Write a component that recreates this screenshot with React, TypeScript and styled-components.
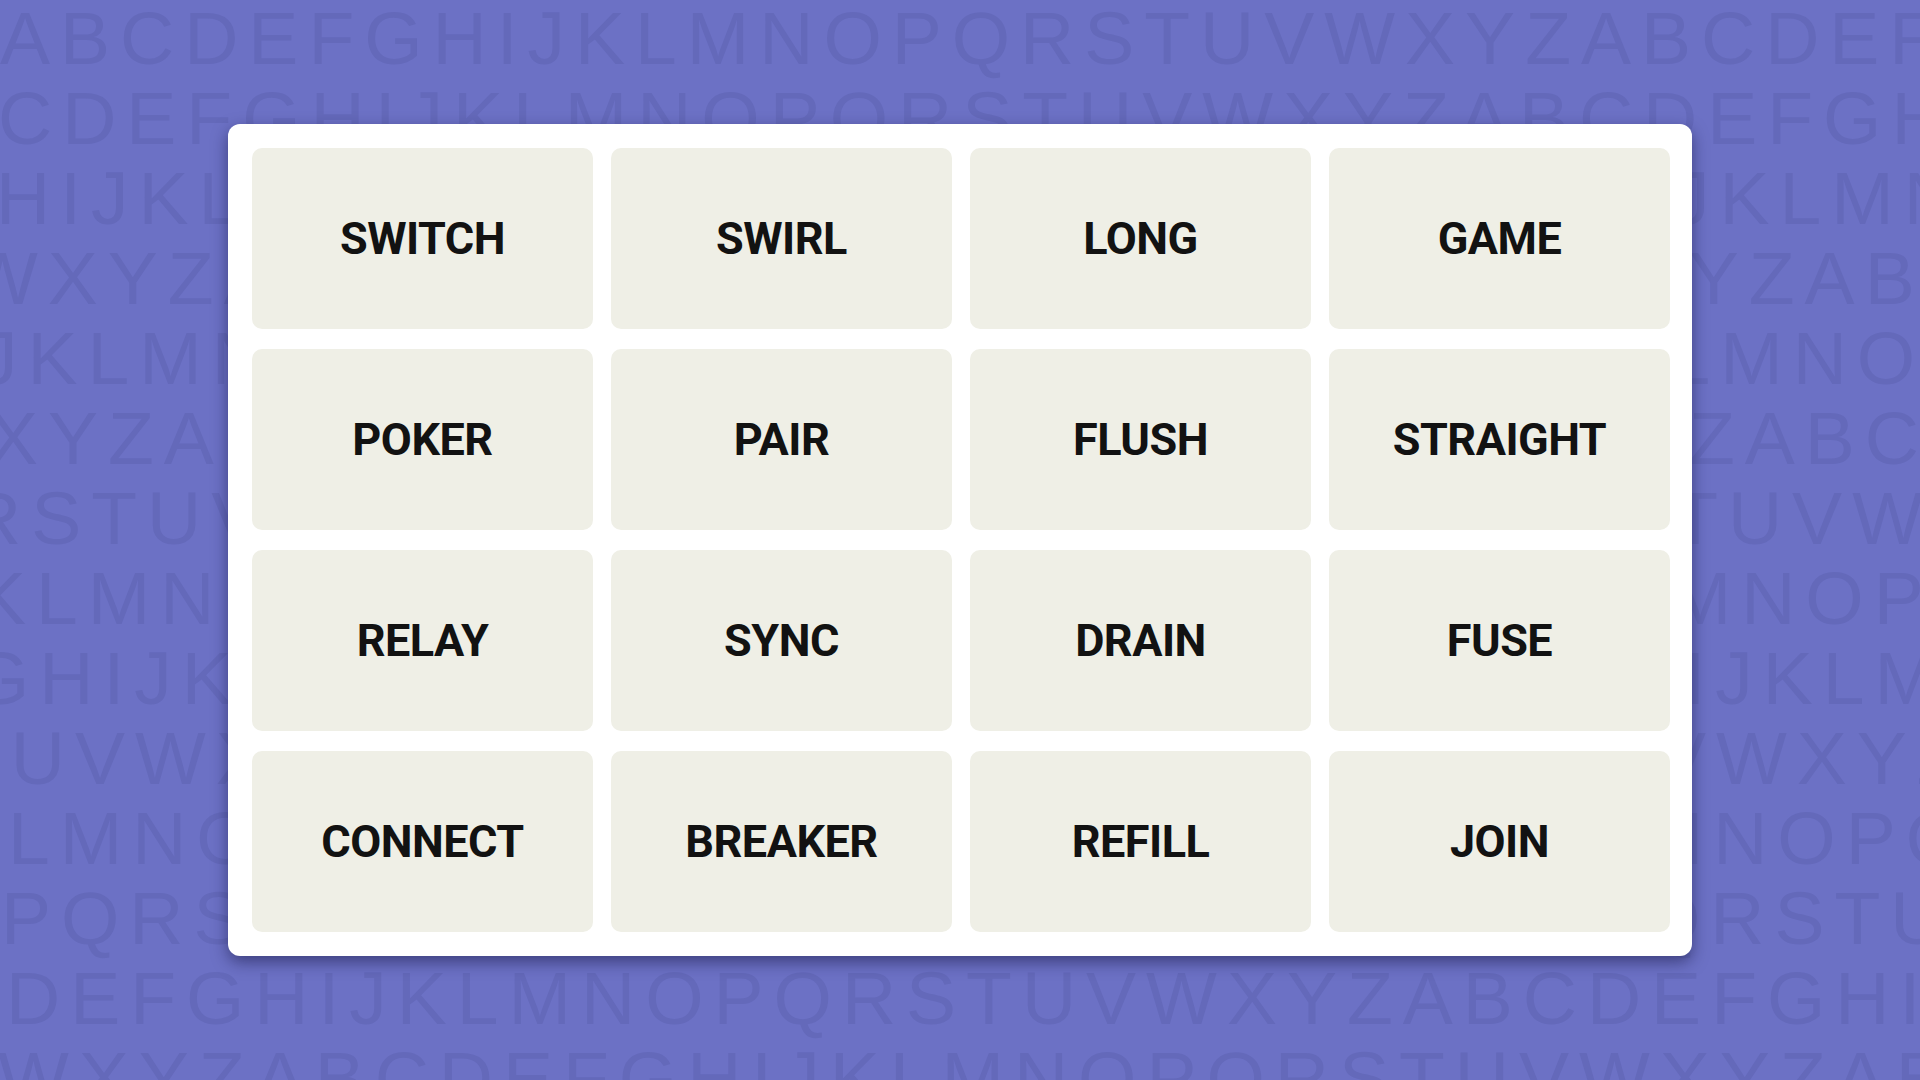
import React from "react";
import styled, { createGlobalStyle } from "styled-components";

const GlobalStyle = createGlobalStyle`
  html, body {
    margin: 0;
    padding: 0;
    background: #6c71c5;
  }
`;

const ALPHABET = "ABCDEFGHIJKLMNOPQRSTUVWXYZ";

// each backdrop line: first letter and horizontal shift in px
const BACKDROP_ROWS: [string, number][] = [
  ["A", 0],
  ["C", -2],
  ["H", -4],
  ["W", -33],
  ["J", -20],
  ["X", -12],
  ["R", -33],
  ["K", -24],
  ["G", -29],
  ["T", -45],
  ["L", 8],
  ["P", 1],
  ["D", 6],
  ["W", -2],
];

const WORDS = [
  "SWITCH", "SWIRL", "LONG", "GAME",
  "POKER", "PAIR", "FLUSH", "STRAIGHT",
  "RELAY", "SYNC", "DRAIN", "FUSE",
  "CONNECT", "BREAKER", "REFILL", "JOIN",
];

const Stage = styled.div`
  display: grid;
  grid-template-columns: 1920px;
  grid-template-rows: 1080px;
  width: 1920px;
  height: 1080px;
  overflow: hidden;
  background: #6c71c5;
`;

const Backdrop = styled.div`
  grid-area: 1 / 1;
  min-width: 0;
  min-height: 0;
  overflow: hidden;
  display: flex;
  flex-direction: column;
  font-family: "Liberation Sans", Arial, sans-serif;
  font-size: 75px;
  line-height: 80px;
  letter-spacing: 10px;
  color: #6469ba;
  user-select: none;
`;

const BackdropRow = styled.div<{ shift: number; lead?: boolean }>`
  flex: none;
  white-space: nowrap;
  margin-left: ${({ shift }) => shift}px;
  margin-top: ${({ lead }) => (lead ? "-2px" : "0")};
`;

const Center = styled.div`
  grid-area: 1 / 1;
  min-width: 0;
  display: flex;
  align-items: center;
  justify-content: center;
`;

const Board = styled.div`
  width: 1464px;
  box-sizing: border-box;
  padding: 24px 22px 24px 24px;
  background: #ffffff;
  border-radius: 12px;
  box-shadow: 0 6px 16px rgba(22, 22, 66, 0.55);
  display: grid;
  grid-template-columns: repeat(4, 1fr);
  grid-auto-rows: 181px;
  column-gap: 18px;
  row-gap: 20px;
`;

const Tile = styled.div`
  display: flex;
  align-items: center;
  justify-content: center;
  background: #efefe6;
  border-radius: 10px;
  font-family: Roboto, "Liberation Sans", Arial, sans-serif;
  font-weight: 700;
  font-size: 45px;
  letter-spacing: -0.5px;
  color: #121212;
`;

const rowText = (start: string) => {
  const i = ALPHABET.indexOf(start);
  let s = "";
  for (let k = 0; k < 36; k++) s += ALPHABET[(i + k) % 26];
  return s;
};

const App: React.FC = () => (
  <>
    <GlobalStyle />
    <Stage>
      <Backdrop aria-hidden>
        {BACKDROP_ROWS.map(([start, shift], i) => (
          <BackdropRow key={i} shift={shift} lead={i === 0}>
            {rowText(start)}
          </BackdropRow>
        ))}
      </Backdrop>
      <Center>
        <Board>
          {WORDS.map((w) => (
            <Tile key={w}>{w}</Tile>
          ))}
        </Board>
      </Center>
    </Stage>
  </>
);

export default App;
